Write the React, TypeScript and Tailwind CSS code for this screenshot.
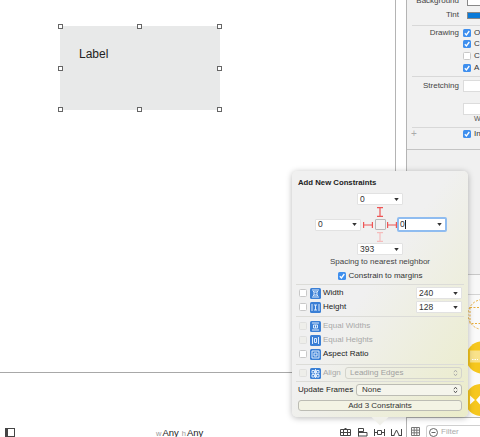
import type { ReactNode } from 'react';

const ui = "font-['Liberation_Sans',Arial,sans-serif]";

function Caret() {
  return (
    <svg viewBox="0 0 6 4" className="ml-auto h-[3px] w-[5px] shrink-0 fill-[#333]">
      <path d="M0 0h6L3 4z" />
    </svg>
  );
}

function Dropdown({ value, className }: { value: string; className: string }) {
  return (
    <div className={`flex h-[12px] shrink-0 items-center rounded-[1px] border border-[#e2e2e2] bg-white pl-[2px] pr-[3px] text-[8.5px] leading-none text-[#333] ${className}`}>
      {value}
      <Caret />
    </div>
  );
}

function Updown({ dim }: { dim?: boolean }) {
  return (
    <svg viewBox="0 0 6 10" className={`ml-auto h-[8px] w-[5px] shrink-0 fill-none stroke-[1.2] ${dim ? 'stroke-[#aaa]' : 'stroke-[#555]'}`}>
      <path d="M1 4l2-2.5L5 4M1 6l2 2.5L5 6" />
    </svg>
  );
}

function Check({ checked, dim }: { checked?: boolean; dim?: boolean }) {
  if (checked) {
    return (
      <div className="flex h-[8px] w-[8px] shrink-0 items-center justify-center rounded-[1.5px] bg-[#3f8fee]">
        <svg viewBox="0 0 8 8" className="h-[8px] w-[8px] fill-none stroke-white stroke-[1.3]">
          <path d="M1.8 4.2l1.6 1.7 2.9-3.9" />
        </svg>
      </div>
    );
  }
  return <div className={`h-[8px] w-[8px] shrink-0 rounded-[1.5px] border ${dim ? 'border-[#e0e0de] bg-[#eeeeea]' : 'border-[#c8c8c8] bg-white'}`} />;
}

function BlueIcon({ d }: { d: string }) {
  return (
    <svg viewBox="0 0 11 11" className="h-[11px] w-[11px] shrink-0">
      <rect width="11" height="11" rx="1.5" fill="#3a7fd5" />
      <path d={d} fill="none" stroke="#dcebfc" strokeWidth="1" />
    </svg>
  );
}

const iconWidth = 'M2 2h7M2 9h7M4 4h3v3H4zM3 3l1 1M8 3L7 4M3 8l1-1M8 8L7 7';
const iconHeight = 'M2 2v7M9 2v7M4 3h3M4 8h3M5.5 3v5';
const iconEqualW = 'M2 2h7M2 9h7M3.5 4h4v3h-4zM5.5 4v3';
const iconEqualH = 'M2.5 2v7M8.5 2v7M4.5 3.5h2v4h-2z';
const iconAspect = 'M2 2h7M2 9h7M2 2v7M9 2v7M4 4h3v3H4z';
const iconAlign = 'M5.5 1v9M2 2.5h2.5V5H2zM2 6.5h2.5V9H2zM6.5 2.5H9V5H6.5zM6.5 6.5H9V9H6.5z';

function ConstraintRow({ icon, label, dim, value }: { icon: string; label: string; dim?: boolean; value?: string }) {
  return (
    <div className="flex h-[14px] shrink-0 items-center pl-[7px] pr-[6px]">
      <Check dim={dim} />
      <div className="ml-[3px]">
        <BlueIcon d={icon} />
      </div>
      <span className={`ml-[2px] whitespace-nowrap text-[8px] leading-none ${dim ? 'text-[#a8a8a8]' : 'text-[#222]'}`}>{label}</span>
      {value && <Dropdown value={value} className="ml-auto w-[46px]" />}
    </div>
  );
}

function Divider({ className }: { className: string }) {
  return <div className={`mx-[4px] h-px shrink-0 bg-[#dcdcd8] ${className}`} />;
}

function Strut({ vertical, faded }: { vertical?: boolean; faded?: boolean }) {
  return (
    <svg
      viewBox="0 0 10 10"
      className={`h-[10px] w-[10px] shrink-0 fill-none stroke-[1.2] ${faded ? 'stroke-[#f5bcbc]' : 'stroke-[#ee5555]'} ${vertical ? 'rotate-90' : ''}`}
    >
      <path d="M.6 2v6M9.4 2v6M.6 5h8.8" />
    </svg>
  );
}

function Handle({ className }: { className: string }) {
  return <div className={`absolute h-[5px] w-[5px] border border-[#666] bg-white ${className}`} />;
}

function InspectorRow({ label, className, children }: { label?: string; className?: string; children?: ReactNode }) {
  return (
    <div className={`flex shrink-0 items-center ${className ?? 'h-[12px]'}`}>
      <span className="w-[52px] shrink-0 whitespace-nowrap text-right text-[8px] leading-none text-[#444]">{label}</span>
      <div className="ml-[4px] flex items-center gap-[3px] whitespace-nowrap text-[8px] leading-none text-[#333]">{children}</div>
    </div>
  );
}

function ToolIcon({ d }: { d: string }) {
  return (
    <svg viewBox="0 0 11 9" className="h-[9px] w-[11px] shrink-0 fill-none stroke-[#444] stroke-[1]">
      <path d={d} />
    </svg>
  );
}

function ConstraintsPopover() {
  return (
    <div className="absolute left-[292px] top-[171px] h-[246px] w-[176px] rounded-[5px] bg-[#f0f0ee] shadow-[0_1px_6px_rgba(0,0,0,0.28)]">
      <div className="absolute left-[82px] top-[240px] h-[12px] w-[12px] rotate-45 bg-[#f0f0ea]" />
      <div className="absolute inset-0 rounded-[5px] bg-linear-to-br from-[#f0f0f0] from-45% to-[#ebecc9]" />
      <div className="relative flex h-full flex-col text-[#222]">
        <div className="ml-[6px] mt-[7px] h-[10px] whitespace-nowrap text-[7.75px] font-bold leading-[10px]">Add New Constraints</div>

        <div className="flex flex-col items-center">
          <Dropdown value="0" className="mt-[5px] w-[46px]" />
          <div className="mt-[2px]">
            <Strut vertical />
          </div>
          <div className="ml-[23px] flex h-[15px] items-center self-start">
            <Dropdown value="0" className="w-[46px]" />
            <div className="ml-[2px]">
              <Strut />
            </div>
            <div className="ml-[2px] h-[11px] w-[11px] shrink-0 rounded-[1px] border-[1.5px] border-[#b9b9b9] bg-[#f2f2f2]" />
            <div className="ml-[1px]">
              <Strut />
            </div>
            <div className="flex h-[15px] w-[50px] shrink-0 items-center rounded-[2px] border-2 border-[#8fbcf0] bg-white pl-[1px] pr-[3px] text-[8.5px] leading-none text-[#333]">
              0<span className="h-[9px] w-px bg-[#222]" />
              <Caret />
            </div>
          </div>
          <Strut vertical faded />
          <Dropdown value="393" className="mt-[1px] w-[46px]" />
          <div className="mt-[2px] h-[10px] whitespace-nowrap text-[8px] leading-[10px] text-[#444]">Spacing to nearest neighbor</div>
          <div className="mt-[4px] flex h-[10px] items-center gap-[3px] whitespace-nowrap text-[8px] leading-none text-[#333]">
            <Check checked />
            Constrain to margins
          </div>
        </div>

        <Divider className="mt-[3px]" />
        <div className="mt-[1px]">
          <ConstraintRow icon={iconWidth} label="Width" value="240" />
          <ConstraintRow icon={iconHeight} label="Height" value="128" />
        </div>
        <Divider className="mt-[2px]" />
        <div className="mt-[2px]">
          <ConstraintRow icon={iconEqualW} label="Equal Widths" dim />
          <ConstraintRow icon={iconEqualH} label="Equal Heights" dim />
          <ConstraintRow icon={iconAspect} label="Aspect Ratio" />
        </div>
        <Divider className="mt-[3px]" />
        <div className="mt-[1px] flex h-[14px] shrink-0 items-center pl-[7px] pr-[6px]">
          <Check dim />
          <div className="ml-[3px]">
            <BlueIcon d={iconAlign} />
          </div>
          <span className="ml-[2px] text-[8px] leading-none text-[#a8a8a8]">Align</span>
          <div className="ml-auto flex h-[12px] w-[117px] items-center whitespace-nowrap rounded-[3px] border border-[#d4d4cc] pl-[4px] pr-[3px] text-[8px] leading-none text-[#a0a0a0]">
            Leading Edges
            <Updown dim />
          </div>
        </div>
        <Divider className="mt-[1px]" />
        <div className="mt-[2px] flex h-[12px] shrink-0 items-center pl-[6px] pr-[6px]">
          <span className="whitespace-nowrap text-[8px] leading-none text-[#222]">Update Frames</span>
          <div className="ml-auto flex h-[12px] w-[106px] shrink-0 items-center rounded-[3px] border border-[#bcbcb4] bg-[#f5f5ec] pl-[5px] pr-[3px] text-[8px] leading-none text-[#333]">
            None
            <Updown />
          </div>
        </div>
        <div className="mx-[6px] mt-[4px] flex h-[11px] shrink-0 items-center justify-center whitespace-nowrap rounded-[3px] border border-[#bcbcb4] bg-[#f3f3e4] text-[8px] leading-none text-[#333]">
          Add 3 Constraints
        </div>
      </div>
    </div>
  );
}

export default function App() {
  return (
    <div className={`relative flex h-[437px] w-[480px] overflow-hidden bg-white ${ui}`}>
      {/* Canvas and bottom bar */}
      <div className="flex w-[407px] shrink-0 flex-col border-r border-[#b4b4b4]">
        <div className="flex h-[373px] shrink-0 border-b border-[#a8a8a8]">
          <div className="flex-1 pl-[60px] pt-[26px]">
            <div className="relative h-[84px] w-[160px] bg-[#e8e9e9] pl-[19px] pt-[21px] text-[12px] leading-[14px] text-[#222]">
              Label
              <Handle className="-left-[2px] -top-[2px]" />
              <Handle className="left-[77px] -top-[2px]" />
              <Handle className="-right-[2px] -top-[2px]" />
              <Handle className="-left-[2px] top-[40px]" />
              <Handle className="-right-[2px] top-[40px]" />
              <Handle className="-left-[2px] -bottom-[2px]" />
              <Handle className="left-[77px] -bottom-[2px]" />
              <Handle className="-right-[2px] -bottom-[2px]" />
            </div>
          </div>
          <div className="w-[11px] border-l border-[#b4b4b4]" />
        </div>
        <div className="-mb-[2px] flex flex-1 items-end">
          <div className="mb-[2px] ml-[5px] h-[9px] w-[10px] border-[1.5px] border-l-[3px] border-[#444] bg-white" />
          <div className="ml-[141px] flex items-baseline text-[9.5px] leading-[10px] text-[#222]">
            <span className="mr-[1px] text-[7.5px] text-[#999]">w</span>Any
            <span className="ml-[3px] mr-[1px] text-[7.5px] text-[#999]">h</span>Any
          </div>
          <div className="mb-[2px] ml-[137px] flex items-center gap-[6px]">
            <ToolIcon d="M.5 1.5h10v6H.5zM3.5 1.5v6M7.5 1.5v6M.5 4.5h10M4.5.5h2" />
            <ToolIcon d="M1.5.5h5v3h-5zM1.5 4.5h8.5v3.5H1.5zM1.5.5v8" />
            <ToolIcon d="M.5 1v7M10.5 1v7M3.5 2.5h4v4h-4zM.5 4.5h3M7.5 4.5h3" />
            <ToolIcon d="M.5 1v7M10.5 1v7M5.5 2l-2.5 5M5.5 2l2.5 5M.5 7.5h3M7.5 7.5h3" />
          </div>
        </div>
      </div>

      {/* Right column */}
      <div className="flex min-w-0 flex-1 flex-col">
        <div className="flex h-[150px] shrink-0 flex-col overflow-hidden border-b border-[#c4c4c4] bg-[#f1f1f1]">
          <div className="-mt-[5px]">
            <InspectorRow label="Background">
              <span className="ml-[4px] h-[9px] w-[40px] border border-[#888] bg-white" />
            </InspectorRow>
          </div>
          <InspectorRow label="Tint" className="mt-[2px] h-[12px]">
            <span className="ml-[4px] h-[7px] w-[40px] border border-[#888] bg-[#0a7ad8]" />
          </InspectorRow>
          <div className="ml-[5px] mt-[4px] h-px shrink-0 bg-[#d8d8d8]" />
          <InspectorRow label="Drawing" className="mt-[1px] h-[11.67px]">
            <Check checked />O
          </InspectorRow>
          <InspectorRow className="h-[11.67px]">
            <Check checked />C
          </InspectorRow>
          <InspectorRow className="h-[11.67px]">
            <Check />C
          </InspectorRow>
          <InspectorRow className="h-[11.67px]">
            <Check checked />A
          </InspectorRow>
          <div className="ml-[5px] mt-[2px] h-px shrink-0 bg-[#d8d8d8]" />
          <InspectorRow label="Stretching" className="mt-[3px] h-[12px]">
            <span className="h-[12px] w-[40px] border border-[#dcdcdc] bg-white" />
          </InspectorRow>
          <InspectorRow className="mt-[11px] h-[12px]">
            <span className="h-[12px] w-[40px] border border-[#dcdcdc] bg-white" />
          </InspectorRow>
          <InspectorRow className="h-[8px]">
            <span className="ml-[11px] text-[7px] text-[#555]">W</span>
          </InspectorRow>
          <div className="ml-[5px] mt-[4px] h-px shrink-0 bg-[#d8d8d8]" />
          <div className="flex h-[12px] shrink-0 items-center whitespace-nowrap text-[8px] leading-none text-[#333]">
            <span className="ml-[4px] w-[52px] shrink-0 text-[10px] text-[#aaa]">+</span>
            <Check checked />
            <span className="ml-[3px]">In</span>
          </div>
        </div>
        <div className="h-[125px] shrink-0 border-b border-[#c8c8c8] bg-[#f0f0f0]" />
        <div className="h-[20px] shrink-0 border-b border-[#d4d4d4] bg-[#f8f8f8]" />
        <div className="min-h-0 flex-1 bg-[#fafafa]">
          <svg viewBox="407 296 73 121" className="h-full w-full">
            <circle cx="483" cy="315" r="15" fill="none" stroke="#e9ae3c" strokeWidth="1" strokeDasharray="2 1.5" />
            <rect x="470" y="308" width="20" height="16" fill="none" stroke="#e9ae3c" strokeWidth="1" strokeDasharray="2 1.5" />
            <circle cx="482" cy="358" r="16" fill="#f6c71e" />
            <rect x="470" y="351" width="14" height="12" fill="#f9e28a" />
            <path d="M472 360h6" stroke="#fff" strokeWidth="1" strokeDasharray="1.5 1" />
            <circle cx="481" cy="400.5" r="16" fill="#f6c71e" />
            <path d="M470 396l5 4.5-5 4.5zM480 396l-4 4.5 4 4.5z" fill="#fff" />
          </svg>
        </div>
        <div className="-mb-[2px] flex h-[22px] shrink-0 items-end border-t border-[#b4b4b4] bg-white">
          <svg viewBox="0 0 9 9" className="mb-[3px] ml-[4px] h-[9px] w-[9px] shrink-0 fill-none stroke-[#777] stroke-[1]">
            <path d="M.5.5h8v8h-8zM.5 3.2h8M.5 5.8h8M3.2.5v8M5.8.5v8" />
          </svg>
          <div className="ml-[6px] flex h-[14px] flex-1 items-center gap-[3px] rounded-l-[3px] border border-r-0 border-[#cfcfcf] pl-[2px] text-[8px] leading-none text-[#aaa]">
            <svg viewBox="0 0 9 9" className="h-[9px] w-[9px] shrink-0 fill-none stroke-[#666] stroke-[1]">
              <circle cx="4.5" cy="4.5" r="4" />
              <path d="M2.5 4.5h4" />
            </svg>
            Filter
          </div>
        </div>
      </div>

      <ConstraintsPopover />
    </div>
  );
}
